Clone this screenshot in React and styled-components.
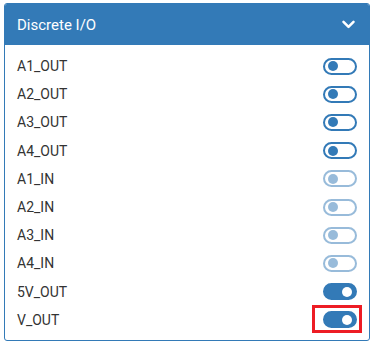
import React from 'react';
import styled, { createGlobalStyle } from 'styled-components';

const GlobalStyle = createGlobalStyle`
  body {
    margin: 0;
    background: #ffffff;
    font-family: Roboto, "Liberation Sans", Arial, sans-serif;
  }
`;

const Page = styled.div`
  padding: 3px 4px 5px 4px;
`;

const Card = styled.div`
  width: 366px;
  box-sizing: border-box;
  border: 1px solid #337ab7;
  border-radius: 3px;
  background: #ffffff;
  overflow: hidden;
`;

const Header = styled.div`
  display: flex;
  align-items: center;
  justify-content: space-between;
  height: 41px;
  padding: 0 14px 0 12px;
  background: #337ab7;
  color: #ffffff;
  font-size: 15px;
`;

const Body = styled.div`
  padding: 7px 12px 6px 12px;
`;

const Row = styled.div`
  display: flex;
  align-items: center;
  justify-content: space-between;
  height: 28.2px;
  color: #333333;
  font-size: 14px;
`;

const Switch = styled.div`
  position: relative;
  box-sizing: border-box;
  width: 34px;
  height: 17px;
  border-radius: 9px;
  border: 2px solid #337ab7;
  background: ${(p) => (p.$on ? '#337ab7' : '#ffffff')};
  opacity: ${(p) => (p.$disabled ? 0.5 : 1)};

  &::before {
    content: '';
    position: absolute;
    top: 50%;
    left: ${(p) => (p.$on ? 'auto' : '3px')};
    right: ${(p) => (p.$on ? '3px' : 'auto')};
    width: 10px;
    height: 10px;
    margin-top: -5px;
    border-radius: 50%;
    background: ${(p) => (p.$on ? '#ffffff' : '#337ab7')};
  }

  &::after {
    content: '';
    display: ${(p) => (p.$marked ? 'block' : 'none')};
    position: absolute;
    top: -8px;
    bottom: -7px;
    left: -13px;
    right: -7px;
    border: 3px solid #ed1c24;
  }
`;

const Chevron = () => (
  <svg width="13" height="9" viewBox="0 0 13 9">
    <path d="M1.5 1.8 L6.5 6.8 L11.5 1.8" fill="none" stroke="#ffffff" strokeWidth="2.5" strokeLinecap="round" strokeLinejoin="round" />
  </svg>
);

const rows = [
  { name: 'A1_OUT' },
  { name: 'A2_OUT' },
  { name: 'A3_OUT' },
  { name: 'A4_OUT' },
  { name: 'A1_IN', disabled: true },
  { name: 'A2_IN', disabled: true },
  { name: 'A3_IN', disabled: true },
  { name: 'A4_IN', disabled: true },
  { name: '5V_OUT', on: true },
  { name: 'V_OUT', on: true, marked: true },
];

export default function App() {
  return (
    <Page>
      <GlobalStyle />
      <Card>
        <Header>
          <span>Discrete I/O</span>
          <Chevron />
        </Header>
        <Body>
          {rows.map((r) => (
            <Row key={r.name}>
              <span>{r.name}</span>
              <Switch $on={r.on} $disabled={r.disabled} $marked={r.marked} />
            </Row>
          ))}
        </Body>
      </Card>
    </Page>
  );
}
